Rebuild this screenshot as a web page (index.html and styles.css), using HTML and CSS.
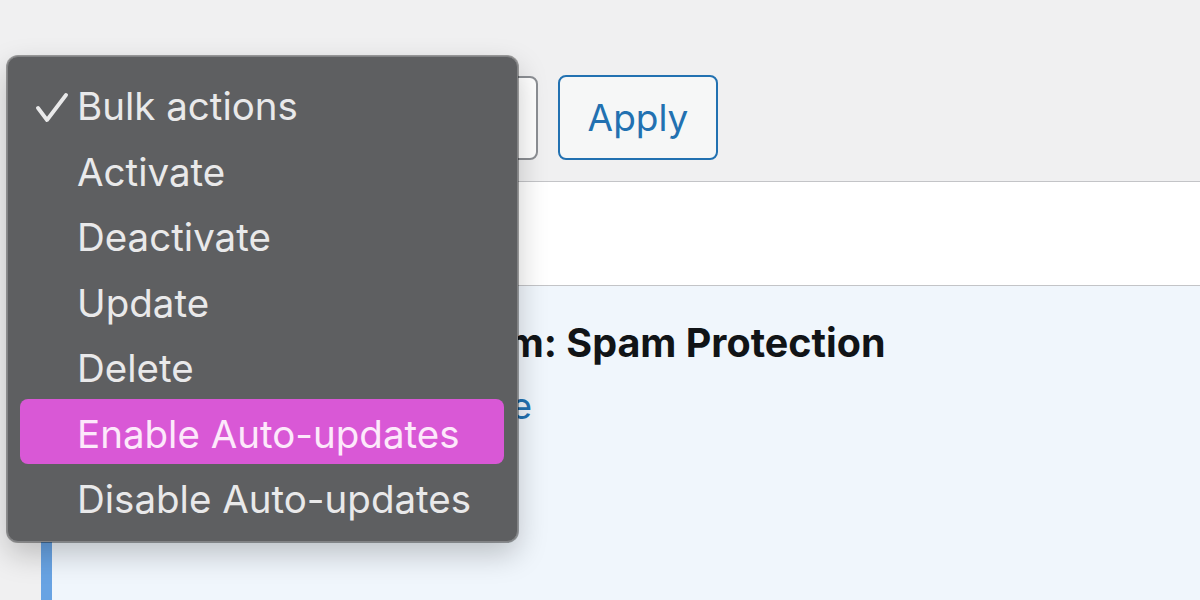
FILE: index.html
```html
<!DOCTYPE html>
<html lang="en">
<head>
<meta charset="utf-8">
<title>Plugins – Bulk actions</title>
<link rel="stylesheet" href="styles.css">
</head>
<body>
<div class="page">
  <div class="toolbar">
    <div class="select"></div>
    <button class="apply">Apply</button>
  </div>
  <div class="table">
    <div class="head-row"></div>
    <div class="plugin-row">
      <div class="plugin-title">Akismet Anti-spam: Spam Protection</div>
      <div class="row-actions"><a href="#">Settings</a> | <a href="#">Deactivate</a></div>
    </div>
  </div>

  <div class="menu">
    <div class="item checked">
      <svg class="check" width="32" height="30" viewBox="0 0 32 30"><polyline points="2,15 11,27 30,2" fill="none" stroke="#e9e9ea" stroke-width="3.8" stroke-linecap="round" stroke-linejoin="round"/></svg>
      Bulk actions
    </div>
    <div class="item">Activate</div>
    <div class="item">Deactivate</div>
    <div class="item">Update</div>
    <div class="item">Delete</div>
    <div class="item active">Enable Auto-updates</div>
    <div class="item">Disable Auto-updates</div>
  </div>
</div>
</body>
</html>
```

FILE: styles.css
```css
html, body {
  margin: 0;
  padding: 0;
  background: #f0f0f1;
  font-family: Inter, "Liberation Sans", Arial, sans-serif;
}

.page {
  position: relative;
  width: 1200px;
  height: 600px;
  overflow: hidden;
}

.toolbar {
  height: 181px;
  box-sizing: border-box;
  padding: 75px 0 0 41px;
  display: flex;
  align-items: flex-start;
  gap: 20px;
}

.select {
  margin-top: 1px;
  width: 497px;
  height: 84px;
  box-sizing: border-box;
  border: 2px solid #8c8f94;
  border-radius: 8px;
  background: #ffffff;
}

.apply {
  width: 160px;
  height: 85px;
  box-sizing: border-box;
  border: 2px solid #2271b1;
  border-radius: 8px;
  background: #f6f7f7;
  color: #2271b1;
  font-family: Inter, "Liberation Sans", Arial, sans-serif;
  font-size: 37px;
  padding: 0;
  margin: 0;
}

.table {
  margin-left: 41px;
  border-top: 1px solid #c3c4c7;
}

.head-row {
  height: 103px;
  background: #ffffff;
  border-bottom: 1px solid #c3c4c7;
}

.plugin-row {
  height: 320px;
  background: #f0f6fc;
  border-left: 11px solid #68a3e3;
  box-sizing: border-box;
  padding: 33px 0 0 119px;
}

.plugin-title {
  font-weight: 700;
  font-size: 39.5px;
  line-height: 48px;
  color: #111417;
  white-space: nowrap;
}

.row-actions {
  margin-top: 15px;
  font-size: 37px;
  line-height: 48px;
  color: #a7aaad;
  white-space: nowrap;
}

.row-actions a {
  color: #2271b1;
  text-decoration: none;
}

.menu {
  position: absolute;
  left: 7px;
  top: 56px;
  width: 511px;
  height: 486px;
  box-sizing: border-box;
  padding: 17px 13px 0 12px;
  background: #5e5f61;
  border: 1px solid #828385;
  border-radius: 11px;
  box-shadow: 0 0 0 1px rgba(0, 0, 0, 0.35), 0 12px 30px rgba(0, 0, 0, 0.22);
}

.item {
  position: relative;
  height: 65.5px;
  line-height: 65.5px;
  padding-left: 57px;
  font-size: 38.5px;
  color: #e9e9ea;
  white-space: nowrap;
  border-radius: 8px;
}

.item.active {
  background: #d958d6;
  color: #fde9fb;
  height: 65px;
  line-height: 70px;
  margin-top: -3px;
  margin-bottom: 3.5px;
}

.check {
  position: absolute;
  left: 16px;
  top: 19px;
}
```
